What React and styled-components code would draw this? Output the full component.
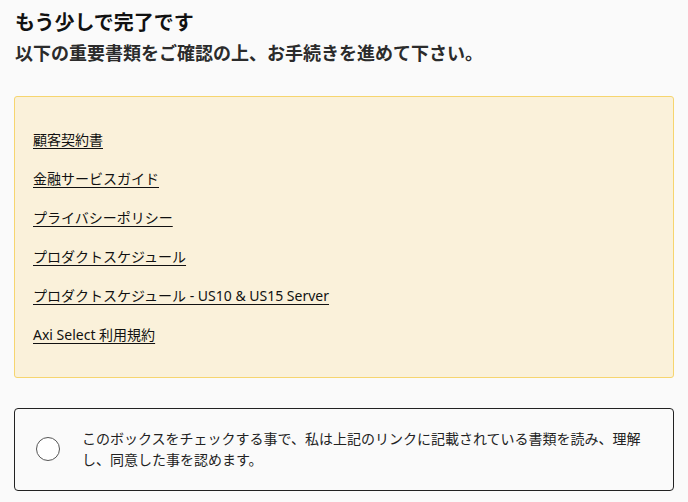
import React, { useState } from "react";
import styled, { createGlobalStyle } from "styled-components";

const GlobalStyle = createGlobalStyle`
  html, body {
    margin: 0;
    padding: 0;
    background: #fafafa;
  }
  body {
    font-family: "Noto Sans", "Noto Sans CJK JP", sans-serif;
    color: #1a1a1a;
  }
`;

const Page = styled.div`
  padding: 6px 14px 0 14px;
  display: flex;
  flex-direction: column;
`;

const Heading = styled.h1`
  margin: 0 0 0 1px;
  font-size: 20px;
  line-height: 34px;
  font-weight: 700;
  color: #111;
`;

const SubHeading = styled.h2`
  margin: 0 0 0 1px;
  font-size: 18px;
  line-height: 26px;
  font-weight: 700;
  color: #2b2b2b;
`;

const DocumentBox = styled.div`
  margin-top: 30px;
  background: #faf1da;
  border: 1px solid #f6d56f;
  border-radius: 3px;
  padding: 32px 18px 31px;
  display: flex;
  flex-direction: column;
  gap: 17px;
`;

const DocLink = styled.a`
  font-size: 14px;
  line-height: 22px;
  color: #111;
  text-decoration: underline;
  text-underline-offset: 3px;
  align-self: flex-start;
  cursor: pointer;
`;

const ConsentBox = styled.label`
  margin-top: 30px;
  border: 1px solid #222;
  border-radius: 4px;
  display: flex;
  align-items: center;
  gap: 22px;
  padding: 19px 27px 20px 21px;
  cursor: pointer;
`;

const Radio = styled.span`
  flex: none;
  width: 22px;
  height: 22px;
  border-radius: 50%;
  border: 1px solid #555;
  background: ${(p) => (p.checked ? "#222" : "#fff")};
  box-shadow: ${(p) => (p.checked ? "inset 0 0 0 5px #fff" : "none")};
`;

const ConsentText = styled.span`
  font-size: 14px;
  line-height: 21px;
  color: #222;
`;

const documents = [
  "顧客契約書",
  "金融サービスガイド",
  "プライバシーポリシー",
  "プロダクトスケジュール",
  "プロダクトスケジュール - US10 & US15 Server",
  "Axi Select 利用規約",
];

export default function App() {
  const [checked, setChecked] = useState(false);
  return (
    <>
      <GlobalStyle />
      <Page>
        <Heading>もう少しで完了です</Heading>
        <SubHeading>以下の重要書類をご確認の上、お手続きを進めて下さい。</SubHeading>
        <DocumentBox>
          {documents.map((d) => (
            <DocLink key={d}>{d}</DocLink>
          ))}
        </DocumentBox>
        <ConsentBox onClick={() => setChecked(!checked)}>
          <Radio checked={checked} />
          <ConsentText>
            このボックスをチェックする事で、私は上記のリンクに記載されている書類を読み、理解し、同意した事を認めます。
          </ConsentText>
        </ConsentBox>
      </Page>
    </>
  );
}
